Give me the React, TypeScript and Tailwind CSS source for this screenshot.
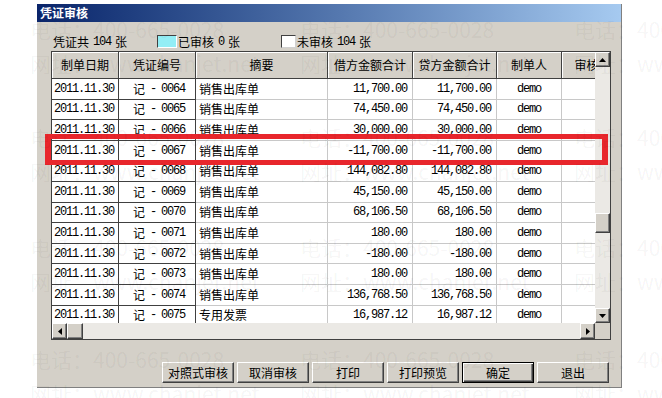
import React from "react";

const cjk = "font-['Noto_Sans_CJK_SC',sans-serif] text-[12px] leading-none";
const num = "font-['Liberation_Mono',monospace] text-[12px] tracking-[-1.2px] leading-none";
const raised =
  "bg-[#d4d0c8] border border-t-white border-l-white border-r-[#404040] border-b-[#404040] shadow-[inset_-1px_-1px_0_#808080]";

const rows: [string, string, string][] = [
  ["0064", "销售出库单", "11,700.00"],
  ["0065", "销售出库单", "74,450.00"],
  ["0066", "销售出库单", "30,000.00"],
  ["0067", "销售出库单", "-11,700.00"],
  ["0068", "销售出库单", "144,082.80"],
  ["0069", "销售出库单", "45,150.00"],
  ["0070", "销售出库单", "68,106.50"],
  ["0071", "销售出库单", "180.00"],
  ["0072", "销售出库单", "-180.00"],
  ["0073", "销售出库单", "180.00"],
  ["0074", "销售出库单", "136,768.50"],
  ["0075", "专用发票", "16,987.12"],
];

const headers: [string, string][] = [
  ["制单日期", "w-[67px]"],
  ["凭证编号", "w-[77px]"],
  ["摘要", "w-[132px]"],
  ["借方金额合计", "w-[85px]"],
  ["贷方金额合计", "w-[84px]"],
  ["制单人", "w-[65px]"],
  ["审核", "w-[50px]"],
];

function Arrow({ dir }: { dir: "up" | "down" | "left" | "right" }) {
  const d = {
    up: "M3.5 0L7 4H0z",
    down: "M0 0H7L3.5 4z",
    left: "M4 0V7L0 3.5z",
    right: "M0 0L4 3.5L0 7z",
  }[dir];
  const vertical = dir === "up" || dir === "down";
  return (
    <svg width={vertical ? 7 : 4} height={vertical ? 4 : 7}>
      <path d={d} fill="#000" />
    </svg>
  );
}

function ArrowBtn({ dir }: { dir: "up" | "down" | "left" | "right" }) {
  return (
    <div className={`flex h-[15px] w-[15px] shrink-0 items-center justify-center ${raised}`}>
      <Arrow dir={dir} />
    </div>
  );
}

// faint phone / site watermark tiled over the screenshot
function Watermark() {
  const lefts = ["left-[30px]", "left-[300px]", "left-[574px]"];
  const tops = [
    ["top-[19px]", "top-[53px]"],
    ["top-[127px]", "top-[161px]"],
    ["top-[237px]", "top-[271px]"],
    ["top-[349px]", "top-[383px]"],
  ];
  return (
    <div className="pointer-events-none absolute inset-0">
      {tops.map(([t1, t2], i) =>
        lefts.map((l, j) => (
          <React.Fragment key={`${i}-${j}`}>
            <span
              className={`absolute ${l} ${t1} whitespace-nowrap font-['Noto_Sans_CJK_SC',sans-serif] text-[21px] leading-none text-black/[0.05]`}
            >
              电话：400-665-0028
            </span>
            <span
              className={`absolute ${l} ${t2} whitespace-nowrap font-['Noto_Sans_CJK_SC',sans-serif] text-[21px] leading-none text-black/[0.05]`}
            >
              网址：www.chanjet.net
            </span>
          </React.Fragment>
        ))
      )}
    </div>
  );
}

export default function App() {
  return (
    <div className="relative h-[398px] w-[662px] overflow-hidden bg-white">
      <div className="ml-[37px] mt-[4px] flex h-[384px] w-[585px] flex-col border-r border-b border-r-[#808080] border-b-[#808080] bg-[#d4d0c8]">
        {/* title bar */}
        <div className="flex h-[18px] shrink-0 items-center bg-linear-to-r from-[#0a246a] to-[#a6caf0] pl-[3px]">
          <span className={`${cjk} font-bold text-white`}>凭证审核</span>
        </div>

        {/* summary */}
        <div className="flex h-[29px] shrink-0 items-center pl-[16px] pt-[10px]">
          <span className="flex w-[104px] items-center gap-[4px]">
            <span className={cjk}>凭证共</span>
            <span className={num}>104</span>
            <span className={cjk}>张</span>
          </span>
          <span className="h-[13px] w-[20px] border border-t-[#404040] border-l-[#404040] border-r-white border-b-white bg-[#93eef5]" />
          <span className="flex w-[104px] items-center gap-[4px] pl-[1px]">
            <span className={cjk}>已审核</span>
            <span className={num}>0</span>
            <span className={cjk}>张</span>
          </span>
          <span className="h-[13px] w-[15px] border border-t-[#404040] border-l-[#404040] border-r-[#d0d0d0] border-b-[#d0d0d0] bg-white" />
          <span className="flex items-center gap-[4px] pl-[1px]">
            <span className={cjk}>未审核</span>
            <span className={num}>104</span>
            <span className={cjk}>张</span>
          </span>
        </div>

        {/* table */}
        <div className="ml-[14px] flex h-[289px] w-[560px] shrink-0 flex-col border border-[#404040] bg-white">
          <div className="flex h-[271px]">
            <div className="flex w-[543px] flex-col overflow-hidden">
              <div className="flex h-[27px] shrink-0">
                {headers.map(([h, w]) => (
                  <div
                    key={h}
                    className={`${w} flex shrink-0 items-center justify-center border-r border-b border-[#404040] bg-[#d4d0c8] shadow-[inset_1px_1px_0_#fff]`}
                  >
                    <span className={`${cjk} whitespace-nowrap text-black`}>{h}</span>
                  </div>
                ))}
              </div>
              <div className="flex h-[244px] flex-col overflow-hidden">
                {rows.map(([no, memo, amt]) => (
                  <div key={no} className="flex h-[20.6px] shrink-0">
                    <div className="flex w-[67px] shrink-0 items-center border-r border-b border-[#404040] pl-[2px]">
                      <span className={num}>2011.11.30</span>
                    </div>
                    <div className="flex w-[77px] shrink-0 items-center justify-center gap-[5px] border-r border-b border-[#404040] pl-[4px]">
                      <span className={cjk}>记</span>
                      <span className={num}>-</span>
                      <span className={num}>{no}</span>
                    </div>
                    <div className="flex w-[132px] shrink-0 items-center border-r border-b border-[#c8c8c8] pl-[3px]">
                      <span className={cjk}>{memo}</span>
                    </div>
                    <div className="flex w-[85px] shrink-0 items-center justify-end border-r border-b border-[#c8c8c8] pr-[5px]">
                      <span className={num}>{amt}</span>
                    </div>
                    <div className="flex w-[84px] shrink-0 items-center justify-end border-r border-b border-[#c8c8c8] pr-[5px]">
                      <span className={num}>{amt}</span>
                    </div>
                    <div className="flex w-[65px] shrink-0 items-center justify-center border-r border-b border-[#c8c8c8]">
                      <span className={num}>demo</span>
                    </div>
                    <div className="w-[50px] shrink-0 border-r border-b border-[#c8c8c8]" />
                  </div>
                ))}
              </div>
            </div>
            {/* vertical scrollbar */}
            <div className="flex w-[15px] flex-col bg-[#ebe9e5]">
              <ArrowBtn dir="up" />
              <div className="h-[146px] shrink-0" />
              <div className={`h-[20px] w-[15px] shrink-0 ${raised}`} />
              <div className="flex-1" />
              <ArrowBtn dir="down" />
            </div>
          </div>
          {/* horizontal scrollbar */}
          <div className="flex h-[16px]">
            <div className="flex w-[543px] items-stretch bg-[#ebe9e5]">
              <div className={`flex w-[15px] shrink-0 items-center justify-center ${raised}`}>
                <Arrow dir="left" />
              </div>
              <div className={`w-[16px] shrink-0 ${raised}`} />
              <div className="flex-1" />
              <div className={`flex w-[15px] shrink-0 items-center justify-center ${raised}`}>
                <Arrow dir="right" />
              </div>
            </div>
            <div className="w-[15px] bg-[#d4d0c8]" />
          </div>
        </div>

        {/* buttons */}
        <div className="mt-[22px] flex justify-end gap-[3px] pr-[12px]">
          {["对照式审核", "取消审核", "打印", "打印预览", "确定", "退出"].map((b) =>
            b === "确定" ? (
              <div
                key={b}
                className="flex h-[21px] w-[72px] items-center justify-center border border-black bg-[#d4d0c8] shadow-[inset_1px_1px_0_#fff,inset_-1px_-1px_0_#404040,inset_-2px_-2px_0_#808080]"
              >
                <span className={cjk}>{b}</span>
              </div>
            ) : (
              <div key={b} className={`flex h-[21px] w-[72px] items-center justify-center ${raised}`}>
                <span className={cjk}>{b}</span>
              </div>
            )
          )}
        </div>
      </div>

      {/* red highlight */}
      <div className="pointer-events-none absolute left-[45px] top-[134px] h-[31px] w-[563px] border-x-[6px] border-y-[5px] border-[#e8262c]" />

      <Watermark />
    </div>
  );
}
